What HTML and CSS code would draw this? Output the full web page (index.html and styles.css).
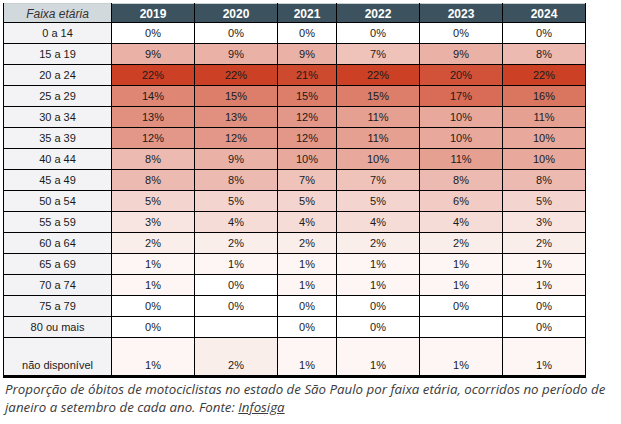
FILE: index.html
```html
<!DOCTYPE html>
<html lang="pt-BR">
<head>
<meta charset="utf-8">
<title>Proporção de óbitos de motociclistas</title>
<link rel="stylesheet" href="styles.css">
</head>
<body>
<div class="page">
  <div class="sheet">
    <div class="hd hd-label">Faixa etária</div>
    <div class="hd">2019</div><div class="hd">2020</div><div class="hd">2021</div><div class="hd">2022</div><div class="hd">2023</div><div class="hd">2024</div>

    <div class="lbl">0 a 14</div>
    <div class="c v0">0%</div><div class="c v0">0%</div><div class="c v0">0%</div><div class="c v0">0%</div><div class="c v0">0%</div><div class="c v0">0%</div>

    <div class="lbl">15 a 19</div>
    <div class="c v9">9%</div><div class="c v9">9%</div><div class="c v9">9%</div><div class="c v7">7%</div><div class="c v9">9%</div><div class="c v8">8%</div>

    <div class="lbl">20 a 24</div>
    <div class="c v22">22%</div><div class="c v22">22%</div><div class="c v21">21%</div><div class="c v22">22%</div><div class="c v20">20%</div><div class="c v22">22%</div>

    <div class="lbl">25 a 29</div>
    <div class="c v14">14%</div><div class="c v15">15%</div><div class="c v15">15%</div><div class="c v15">15%</div><div class="c v17">17%</div><div class="c v16">16%</div>

    <div class="lbl">30 a 34</div>
    <div class="c v13">13%</div><div class="c v13">13%</div><div class="c v12">12%</div><div class="c v11">11%</div><div class="c v10">10%</div><div class="c v11">11%</div>

    <div class="lbl">35 a 39</div>
    <div class="c v12">12%</div><div class="c v12">12%</div><div class="c v12">12%</div><div class="c v11">11%</div><div class="c v10">10%</div><div class="c v10">10%</div>

    <div class="lbl">40 a 44</div>
    <div class="c v8">8%</div><div class="c v9">9%</div><div class="c v10">10%</div><div class="c v10">10%</div><div class="c v11">11%</div><div class="c v10">10%</div>

    <div class="lbl">45 a 49</div>
    <div class="c v8">8%</div><div class="c v8">8%</div><div class="c v7">7%</div><div class="c v7">7%</div><div class="c v8">8%</div><div class="c v8">8%</div>

    <div class="lbl">50 a 54</div>
    <div class="c v5">5%</div><div class="c v5">5%</div><div class="c v5">5%</div><div class="c v5">5%</div><div class="c v6">6%</div><div class="c v5">5%</div>

    <div class="lbl">55 a 59</div>
    <div class="c v3">3%</div><div class="c v4">4%</div><div class="c v4">4%</div><div class="c v4">4%</div><div class="c v4">4%</div><div class="c v3">3%</div>

    <div class="lbl">60 a 64</div>
    <div class="c v2">2%</div><div class="c v2">2%</div><div class="c v2">2%</div><div class="c v2">2%</div><div class="c v2">2%</div><div class="c v2">2%</div>

    <div class="lbl">65 a 69</div>
    <div class="c v1">1%</div><div class="c v1">1%</div><div class="c v1">1%</div><div class="c v1">1%</div><div class="c v1">1%</div><div class="c v1">1%</div>

    <div class="lbl">70 a 74</div>
    <div class="c v1">1%</div><div class="c v0">0%</div><div class="c v1">1%</div><div class="c v1">1%</div><div class="c v1">1%</div><div class="c v1">1%</div>

    <div class="lbl">75 a 79</div>
    <div class="c v0">0%</div><div class="c v0">0%</div><div class="c v0">0%</div><div class="c v0">0%</div><div class="c v0">0%</div><div class="c v0">0%</div>

    <div class="lbl">80 ou mais</div>
    <div class="c v0">0%</div><div class="c v0"></div><div class="c v0">0%</div><div class="c v0">0%</div><div class="c v0"></div><div class="c v0">0%</div>

    <div class="lbl">não disponível</div>
    <div class="c v1">1%</div><div class="c v2">2%</div><div class="c v1">1%</div><div class="c v1">1%</div><div class="c v1">1%</div><div class="c v1">1%</div>
  </div>
  <p class="caption">Proporção de óbitos de motociclistas no estado de São Paulo por faixa etária, ocorridos no período de<br>janeiro a setembro de cada ano. Fonte: <span class="link"><span class="spell">Infosiga</span></span></p>
</div>
</body>
</html>
```

FILE: styles.css
```css
html, body {
  margin: 0;
  padding: 0;
  background: #ffffff;
}

.page {
  padding: 3px 0 0 3px;
}

.sheet {
  display: grid;
  grid-template-columns: 107px 82px 82px 58px 82px 82px 82px;
  grid-template-rows: 19px repeat(15, 20px) 37px;
  gap: 1px;
  padding: 0 1px 3px 1px;
  width: max-content;
  background: #000000;
  font-family: "Liberation Sans", Arial, sans-serif;
  font-size: 11px;
  color: #1a1a1a;
}

.hd {
  display: flex;
  align-items: center;
  justify-content: center;
  padding-top: 1px;
  border-top: 1px solid #c8cfd2;
  background: #3c535f;
  color: #ffffff;
  font-weight: bold;
  font-size: 12px;
}

.hd-label {
  background: #d2d9dc;
  color: #333333;
  font-weight: normal;
  font-style: italic;
}

.lbl,
.c {
  display: flex;
  align-items: flex-end;
  justify-content: center;
  padding-bottom: 3px;
  line-height: 13px;
}

.lbl {
  background: #f3f3f5;
}

.v0  { background: #ffffff; }
.v1  { background: #fdf6f5; }
.v2  { background: #faeeeb; }
.v3  { background: #f8e5e1; }
.v4  { background: #f6dcd7; }
.v5  { background: #f3d4ce; }
.v6  { background: #f1cbc4; }
.v7  { background: #efc3ba; }
.v8  { background: #ecbab0; }
.v9  { background: #eab1a6; }
.v10 { background: #e8a99c; }
.v11 { background: #e6a092; }
.v12 { background: #e39788; }
.v13 { background: #e18f7e; }
.v14 { background: #df8674; }
.v15 { background: #dc7e6a; }
.v16 { background: #da7560; }
.v17 { background: #d86c57; }
.v20 { background: #d15239; }
.v21 { background: #ce4a2f; }
.v22 { background: #cc4125; }

.caption {
  margin: 2px 0 0 2px;
  font-family: "Open Sans", "DejaVu Sans", sans-serif;
  font-style: italic;
  font-size: 13.3px;
  line-height: 18px;
  color: #3a3a3a;
  white-space: nowrap;
}

.link {
  text-decoration: underline;
  text-decoration-color: #3a3a3a;
}

.spell {
  text-decoration: underline wavy #d93025;
  text-underline-offset: 3px;
  text-decoration-thickness: 1px;
}
```
